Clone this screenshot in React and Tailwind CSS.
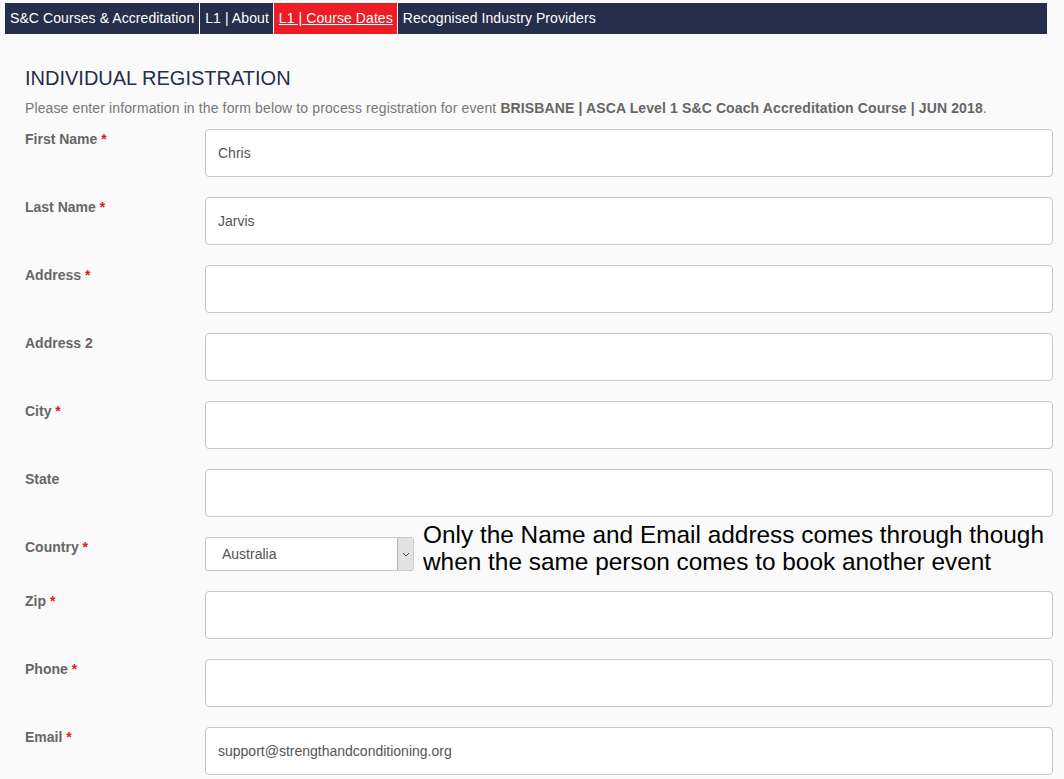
import React from "react";

const rows = [
  { label: "First Name", req: true, value: "Chris" },
  { label: "Last Name", req: true, value: "Jarvis" },
  { label: "Address", req: true, value: "" },
  { label: "Address 2", req: false, value: "" },
  { label: "City", req: true, value: "" },
  { label: "State", req: false, value: "" },
  { label: "Country", req: true, select: true },
  { label: "Zip", req: true, value: "" },
  { label: "Phone", req: true, value: "" },
  { label: "Email", req: true, value: "support@strengthandconditioning.org" },
];

export default function App() {
  return (
    <div className="min-h-[779px] bg-[#fafafa] font-['Liberation_Sans',Arial,sans-serif] overflow-hidden">
      <div className="pt-[3px] px-[5px]">
        <nav className="flex h-[31px] w-[1042px] bg-[#252e4a] text-white text-[14px] tracking-[0.08px]">
          <a className="flex items-center pl-[5px] pr-[5px] border-r border-white">S&amp;C Courses &amp; Accreditation</a>
          <a className="flex items-center pl-[5px] pr-[4px] border-r border-white">L1 | About</a>
          <a className="flex items-center pl-[5px] pr-[4px] bg-[#ee1c25] underline border-r border-white">L1 | Course Dates</a>
          <a className="flex items-center px-[5px]">Recognised Industry Providers</a>
        </nav>
      </div>
      <div className="pl-[25px] pr-[11px]">
        <h1 className="mt-[32px] text-[20px] leading-[24px] text-[#252e4a]">INDIVIDUAL REGISTRATION</h1>
        <p className="mt-[10px] text-[14px] leading-[17px] tracking-[0.12px] text-[#777]">
          Please enter information in the form below to process registration for event{" "}
          <b className="text-[#666]">BRISBANE | ASCA Level 1 S&amp;C Coach Accreditation Course | JUN 2018</b>.
        </p>
        <div className="mt-[12px] flex flex-col gap-[20px]">
          {rows.map((r) => (
            <div key={r.label} className="flex">
              <div className="w-[180px] pt-[2px] text-[14px] leading-[17px] font-bold text-[#666]">
                {r.label}
                {r.req && <span className="text-[#e4161e]"> *</span>}
              </div>
              {r.select ? (
                <div className="relative">
                  <div className="relative flex h-[34px] w-[209px] items-center rounded-[3px] border border-[#c8c8c8] bg-white pl-[16px] text-[14px] text-[#555]">
                    Australia
                    <div className="absolute right-0 top-0 flex h-[32px] w-[16px] items-center justify-center border-l border-[#b5b5b5] bg-[#e2e2e2]">
                      <svg width="8" height="5" viewBox="0 0 8 5"><path d="M1 1l3 3 3-3" fill="none" stroke="#444" strokeWidth="1" /></svg>
                    </div>
                  </div>
                  <div className="absolute left-[218px] top-[-16px] whitespace-nowrap text-[24.4px] leading-[27px] text-black">
                    Only the Name and Email address comes through though
                    <br />
                    when the same person comes to book another event
                  </div>
                </div>
              ) : (
                <div className="flex h-[48px] flex-1 items-center rounded-[4px] border border-[#c8c8c8] bg-white px-[12px] text-[14px] text-[#555]">
                  {r.value}
                </div>
              )}
            </div>
          ))}
        </div>
      </div>
    </div>
  );
}
